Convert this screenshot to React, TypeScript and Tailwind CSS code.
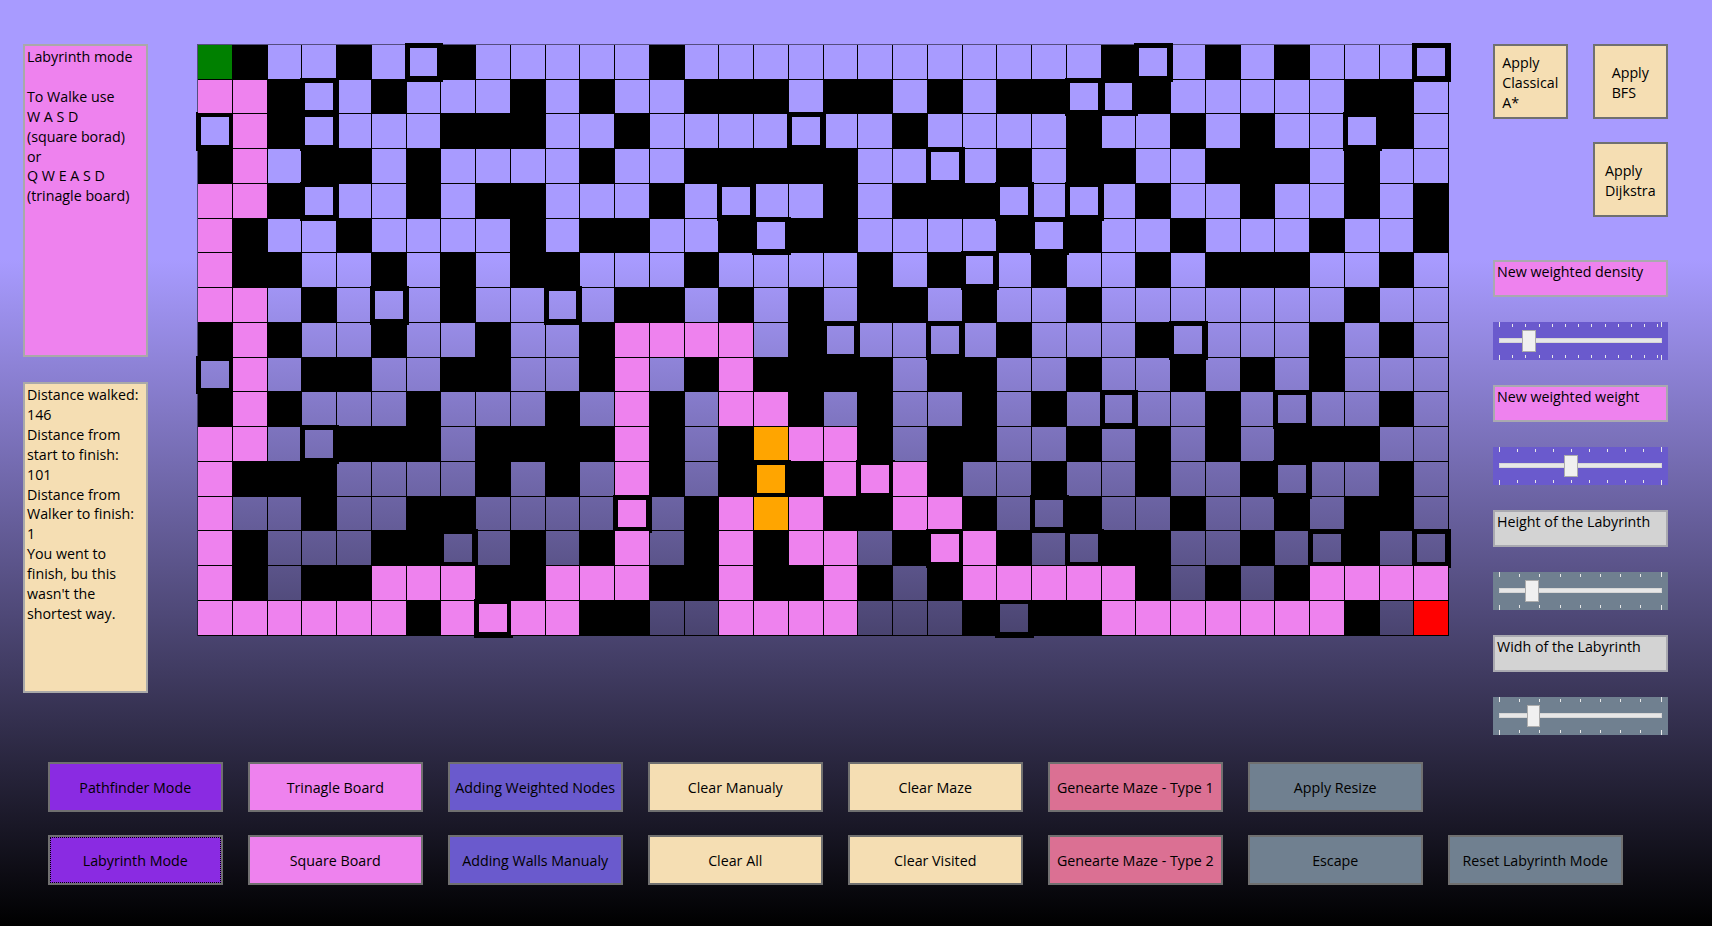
import React from "react";

const BOARD = [
  "G#..#.t#.....#............#t.#.#...t",
  "PP#t.#...#.#..###.##.#.##tt#.....##.",
  "tP#t...###..#....t..#....#..#.#..t#.",
  "#P.##.#....#..#####..t.#.##..###.#..",
  "PP#t..#.##...#.t..#.###t.t.#..#..#.#",
  "P#..#....#.##..#t##....#t#..#...#..#",
  "P##..#.#.##...#....#.#t.#..#.###..#.",
  "PP.#.t.#..t.##.#.#.##.#..#.......#..",
  "#P#..#..#..#PPPP.#t..t.#...#t...#.#.",
  "tP.##..##..#P.#P####.##..#..#.#.#...",
  "#P#...#...#.P#.PP#.#..#.#.t..#.t..#.",
  "PP.t###.####P#.#OPP#.##..#.#.#.###..",
  "P###....#.#.P#.#o#PTP#..#..#..#t..#.",
  "P..#..##....T.#POP##PP#.t#..#..#.##.",
  "P#...##t.#.#P.#P#PP.#TP#.t##..#.t#.t",
  "P#.##PPP##PPP##P##P#.#PPPPP#.#.#PPPP",
  "PPPPPP#PTPP##..PPPP...#t##PPPPPPP#.R",
];

const CELL_STYLES: Record<string, string> = {
  ".": "",
  "#": "bg-black",
  G: "bg-[#008000]",
  R: "bg-[#ff0000]",
  P: "relative z-20 bg-[#ee82ee]",
  O: "relative z-20 bg-[#ffa500]",
  t: "relative z-10 shadow-[inset_0_0_0_3px_#000,0_0_0_2px_#000]",
  T: "relative z-20 bg-[#ee82ee] shadow-[inset_0_0_0_3px_#000,0_0_0_2px_#000]",
  o: "relative z-20 bg-[#ffa500] shadow-[inset_0_0_0_3px_#000,0_0_0_2px_#000]",
};

const BOTTOM_ROWS = [
  [
    { label: "Pathfinder Mode", color: "bg-[#8a2be2]" },
    { label: "Trinagle Board", color: "bg-[#ee82ee]" },
    { label: "Adding Weighted Nodes", color: "bg-[#6a5acd]" },
    { label: "Clear Manualy", color: "bg-[#f5deb3]" },
    { label: "Clear Maze", color: "bg-[#f5deb3]" },
    { label: "Genearte Maze - Type 1", color: "bg-[#db7093]" },
    { label: "Apply Resize", color: "bg-[#708090]" },
  ],
  [
    { label: "Labyrinth Mode", color: "bg-[#8a2be2] outline-1 outline-dotted outline-black [outline-offset:-3px]" },
    { label: "Square Board", color: "bg-[#ee82ee]" },
    { label: "Adding Walls Manualy", color: "bg-[#6a5acd]" },
    { label: "Clear All", color: "bg-[#f5deb3]" },
    { label: "Clear Visited", color: "bg-[#f5deb3]" },
    { label: "Genearte Maze - Type 2", color: "bg-[#db7093]" },
    { label: "Escape", color: "bg-[#708090]" },
    { label: "Reset Labyrinth Mode", color: "bg-[#708090]" },
  ],
];

const Slider = ({ color, thumb, ticks }: { color: string; thumb: number; ticks: number[] }) => (
  <div className={`relative flex h-[38px] items-center px-[6px] ${color}`}>
    <svg className="absolute inset-0" width="175" height="38">
      {ticks.map((x, i) => {
        const end = i === 0 || i === ticks.length - 1;
        return (
          <g key={x} stroke="#e8e8e8" strokeWidth="1">
            <line x1={x + 0.5} x2={x + 0.5} y1={end ? 0 : 2} y2={5} />
            <line x1={x + 0.5} x2={x + 0.5} y1={33} y2={end ? 38 : 36} />
          </g>
        );
      })}
    </svg>
    <div className="h-[5px] w-full border border-[#d6d6d6] bg-[#e7e7e7]" />
    <div
      className="absolute top-[8px] h-[22px] w-[13.5px] border border-[#acacac] bg-[#f0f0f0]"
      style={{ left: thumb }}
    />
  </div>
);

const range = (count: number, step: number) => Array.from({ length: count }, (_, i) => Math.round(6 + i * step));

const Apply = ({ lines, className }: { lines: string[]; className?: string }) => (
  <button className={`flex h-[74.5px] w-[74.5px] items-center justify-center border-2 border-[#707070] bg-[#f5deb3] pt-[3px] text-left ${className ?? ""}`}>
    <span>
      {lines.map((line) => (
        <span key={line} className="block">
          {line}
        </span>
      ))}
    </span>
  </button>
);

const InputLabel = ({ text, color }: { text: string; color: string }) => (
  <div className={`h-[37px] border-2 border-[#a9a9b0] px-[2px] leading-[20px] ${color}`}>{text}</div>
);

export default function App() {
  return (
    <div className="flex h-screen w-full flex-col bg-[linear-gradient(#a89bff_28%,#000_100%)] pt-[44px] font-['Open_Sans',_sans-serif] text-[14.25px] leading-[19.9px] text-black">
      <div className="flex h-[691px] items-start">
        {/* Left info panels */}
        <div className="ml-[23px] flex w-[125px] flex-col gap-[25px]">
          <div className="h-[313px] border-2 border-[#a9a9a9] bg-[#ee82ee] px-[2px] pt-[1px]">
            <p>Labyrinth mode</p>
            <p>&nbsp;</p>
            <p>To Walke use</p>
            <p>W A S D</p>
            <p>(square borad)</p>
            <p>or</p>
            <p>Q W E A S D</p>
            <p>(trinagle board)</p>
          </div>
          <div className="h-[311px] border-2 border-[#a9a9a9] bg-[#f5deb3] px-[2px] pt-[1px]">
            <p>Distance walked:</p>
            <p>146</p>
            <p>Distance from</p>
            <p>start to finish:</p>
            <p>101</p>
            <p>Distance from</p>
            <p>Walker to finish:</p>
            <p>1</p>
            <p>You went to</p>
            <p>finish, bu this</p>
            <p>wasn't the</p>
            <p>shortest way.</p>
          </div>
        </div>

        {/* Board */}
        <div className="ml-[49px] grid h-[591.5px] w-[1252px] grid-cols-[repeat(36,minmax(0,1fr))] grid-rows-[repeat(17,minmax(0,1fr))] border-t border-l border-black/50">
          {BOARD.flatMap((row, r) =>
            row.split("").map((cell, c) => (
              <div key={`${r}-${c}`} className={`border-r border-b border-black ${CELL_STYLES[cell]}`} />
            )),
          )}
        </div>

        {/* Right controls */}
        <div className="ml-[44px] flex w-[175px] flex-col gap-[25px]">
          <div className="mb-[18px] grid grid-cols-[74.5px_74.5px] gap-x-[25.5px] gap-y-[23.5px]">
            <Apply lines={["Apply", "Classical", "A*"]} />
            <Apply lines={["Apply", "BFS"]} />
            <Apply lines={["Apply", "Dijkstra"]} className="col-start-2" />
          </div>
          <InputLabel text="New weighted density" color="bg-[#ee82ee]" />
          <Slider color="bg-[#6a5acd]" thumb={29} ticks={[...range(13, 13.2), 168]} />
          <InputLabel text="New weighted weight" color="bg-[#ee82ee]" />
          <Slider color="bg-[#6a5acd]" thumb={71} ticks={range(10, 18)} />
          <InputLabel text="Height of the Labyrinth" color="bg-[#d3d3d3]" />
          <Slider color="bg-[#708090]" thumb={32} ticks={range(9, 20.2)} />
          <InputLabel text="Widh of the Labyrinth" color="bg-[#d3d3d3]" />
          <Slider color="bg-[#708090]" thumb={33.5} ticks={range(9, 20.2)} />
        </div>
      </div>

      {/* Bottom buttons */}
      <div className="mt-[27px] ml-[48px] flex flex-col gap-[23.5px]">
        {BOTTOM_ROWS.map((row) => (
          <div key={row[0].label} className="flex gap-[25.5px]">
            {row.map((b) => (
              <button key={b.label} className={`h-[49.5px] w-[174.5px] border-2 border-[#707070] pt-[2px] whitespace-nowrap ${b.color}`}>
                {b.label}
              </button>
            ))}
          </div>
        ))}
      </div>
    </div>
  );
}
